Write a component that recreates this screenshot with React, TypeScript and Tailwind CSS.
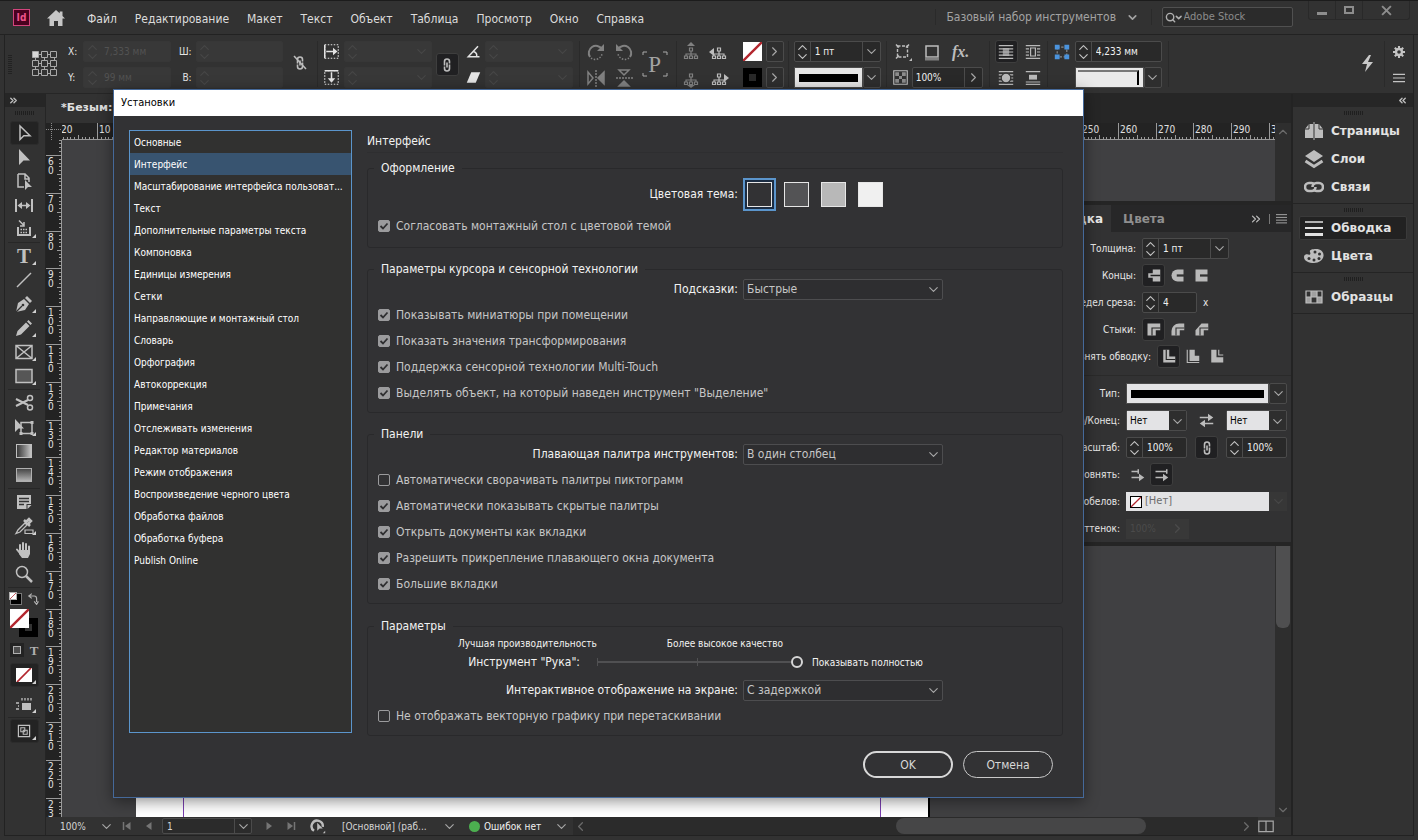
import { useState } from 'react'
import type { ReactNode } from 'react'
import { ChevronDown, ChevronLeft, ChevronRight, ChevronUp, ChevronsLeft, ChevronsRight, Search } from 'lucide-react'

const MENU = ['Файл', 'Редактирование', 'Макет', 'Текст', 'Объект', 'Таблица', 'Просмотр', 'Окно', 'Справка']

const SECTIONS = [
  'Основные',
  'Интерфейс',
  'Масштабирование интерфейса пользоват...',
  'Текст',
  'Дополнительные параметры текста',
  'Компоновка',
  'Единицы измерения',
  'Сетки',
  'Направляющие и монтажный стол',
  'Словарь',
  'Орфография',
  'Автокоррекция',
  'Примечания',
  'Отслеживать изменения',
  'Редактор материалов',
  'Режим отображения',
  'Воспроизведение черного цвета',
  'Обработка файлов',
  'Обработка буфера',
  'Publish Online',
]

const THEMES = [
  { name: 'Темная', color: 'bg-[#323234]' },
  { name: 'Умеренно темная', color: 'bg-[#535355]' },
  { name: 'Умеренно светлая', color: 'bg-[#b8b8b8]' },
  { name: 'Светлая', color: 'bg-[#f0f0f0]' },
]

// 10 mm on the rulers at 100 %
const STEP = 37.8

/* ---------- shared bits ---------- */

function Icon({ children, size = 20, className = '' }: { children: ReactNode; size?: number; className?: string }) {
  return (
    <svg width={size} height={size} viewBox="0 0 20 20" fill="none" stroke="currentColor" strokeWidth="1.5" className={`shrink-0 ${className}`}>
      {children}
    </svg>
  )
}

function Grip() {
  return (
    <svg width="19" height="4" viewBox="0 0 19 4" className="shrink-0" stroke="#1f1f1f">
      <path d="M.5 0v4M2.5 0v4M4.5 0v4M6.5 0v4M8.5 0v4M10.5 0v4M12.5 0v4M14.5 0v4M16.5 0v4M18.5 0v4" />
    </svg>
  )
}

function VLine({ className = '' }: { className?: string }) {
  return <div className={`w-px shrink-0 self-stretch bg-[#2a2a2a] ${className}`} />
}

function Arrows({ dim }: { dim?: boolean }) {
  return (
    <div className={`flex h-full w-4 shrink-0 flex-col items-center justify-center ${dim ? 'text-[#474747]' : 'border-r border-[#4b4b4b] text-[#c4c4c4]'}`}>
      <button type="button" aria-label="Больше" className="flex h-[9px] items-center"><ChevronUp size={15} strokeWidth={1.8} /></button>
      <button type="button" aria-label="Меньше" className="flex h-[9px] items-center"><ChevronDown size={15} strokeWidth={1.8} /></button>
    </div>
  )
}

interface SpinProps {
  label: string
  value?: string
  width: string
  disabled?: boolean
  drop?: boolean
}

function Spin({ label, value = '', width, disabled, drop }: SpinProps) {
  return (
    <div className={`flex h-[21px] shrink-0 items-center overflow-hidden rounded-[2px] border ${width} ${disabled ? 'border-[#373737] bg-[#383838]' : 'border-[#4b4b4b] bg-[#292929]'}`}>
      <Arrows dim={disabled} />
      <input
        aria-label={label}
        defaultValue={value}
        disabled={disabled}
        className={`h-full w-0 min-w-0 flex-1 bg-transparent pl-1 text-[10px] outline-none ${disabled ? 'text-[#525252]' : 'text-[#f0f0f0]'}`}
      />
      {drop && (
        <button type="button" aria-label={`${label}: список`} disabled={disabled} className={`flex h-full w-[18px] items-center justify-center ${disabled ? 'text-[#474747]' : 'border-l border-[#4b4b4b] text-[#a8a8a8]'}`}>
          <ChevronDown size={15} strokeWidth={1.8} />
        </button>
      )}
    </div>
  )
}

function SmallButton({ label, children, wide }: { label: string; children: ReactNode; wide?: string }) {
  return (
    <button type="button" aria-label={label} className={`flex h-[21px] shrink-0 items-center justify-center rounded-[2px] border border-[#4b4b4b] bg-[#2e2e2e] text-[#a8a8a8] ${wide ?? 'w-[18px]'}`}>
      {children}
    </button>
  )
}

function NoneSwatch({ className }: { className: string }) {
  return (
    <svg viewBox="0 0 20 20" className={`shrink-0 bg-white ${className}`}>
      <path d="M0 20L20 0" stroke="#b3262e" strokeWidth="2.5" />
    </svg>
  )
}

function LinkIcon({ className = '' }: { className?: string }) {
  return (
    <svg width="10" height="16" viewBox="0 0 10 16" fill="none" stroke="#bdbdbd" strokeWidth="1.6" className={className}>
      <path d="M2.500 8.500V4.500a2.500 2.500 0 015 0V6.500M7.500 7.500v4a2.500 2.500 0 01-5 0V9.500" />
      <path d="M5 5.500v5" />
    </svg>
  )
}

function IconButton({ label, active, children }: { label: string; active?: boolean; children: ReactNode }) {
  return (
    <button type="button" aria-label={label} className={`flex size-[23px] shrink-0 items-center justify-center rounded-[3px] border text-[#b9b9b9] ${active ? 'border-[#3e3e3e] bg-[#202022]' : 'border-transparent'}`}>
      {children}
    </button>
  )
}

/* ---------- title bar ---------- */

function TitleBar() {
  return (
    <header className="flex h-[34px] shrink-0 items-start border-b border-[#222] pl-[13px]">
      <div className="mt-2 flex size-[17px] items-center justify-center border border-[#d2447c] bg-[#49021f] text-[10px] font-bold leading-none text-[#f0548c]">Id</div>
      <svg width="20" height="18" viewBox="0 0 20 18" fill="#c6c6c6" className="ml-4 mt-2">
        <path d="M10 1L1 9.500h2.500V17H8v-5h4v5h4.500V9.500H19L16.500 7V2.500h-2.800v1.800z" />
      </svg>
      <nav className="ml-3 mt-2 flex text-[12px] leading-5 text-[#dcdcdc]">
        {MENU.map((item) => (
          <button key={item} type="button" className="px-[9px]">{item}</button>
        ))}
      </nav>

      <div className="ml-auto flex items-start">
        <VLine className="mt-2 h-4" />
        <button type="button" className="ml-2.5 mt-1.5 flex items-center gap-2.5 text-[12px] leading-5 text-[#a3a3a3]">
          Базовый набор инструментов
          <ChevronDown size={13} strokeWidth={3} />
        </button>
        <VLine className="ml-3 mt-2 h-4" />
        <label className="ml-2.5 mt-1.5 flex h-5 w-[131px] items-center rounded-[2px] border border-[#505050] bg-[#2b2b2b] pl-0.5 text-[#b0b0b0]">
          <Search size={13} strokeWidth={3} />
          <ChevronDown size={11} strokeWidth={4} className="-ml-0.5" />
          <input aria-label="Adobe Stock" placeholder="Adobe Stock" className="w-full min-w-0 bg-transparent text-[11px] outline-none placeholder:text-[#8c8c8c]" />
        </label>
        <div className="ml-[15px] mr-2 flex h-[19px] rounded-b-[3px] border border-t-0 border-[#292929] text-[#8d8d8d]">
          <button type="button" aria-label="Свернуть" className="flex w-[27px] justify-center border-r border-[#292929] pt-[11px]"><span className="h-[3px] w-2.5 bg-current" /></button>
          <button type="button" aria-label="Развернуть" className="flex w-[27px] items-center justify-center border-r border-[#292929]"><span className="h-2 w-2.5 border-2 border-current" /></button>
          <button type="button" aria-label="Закрыть" className="flex w-[46px] items-center justify-center">
            <Icon size={11}><path d="M2 2l16 16M18 2L2 18" strokeWidth="3.500" /></Icon>
          </button>
        </div>
      </div>
    </header>
  )
}

/* ---------- control bar ---------- */

function TreeIcon({ arrow, dim }: { arrow: string; dim?: boolean }) {
  return (
    <Icon className={dim ? 'text-[#818181]' : 'text-[#bdbdbd]'}>
      <path d="M8.500 6h3v3h-3zM10 9v3M5 14v-2h10v2M3.500 14h3v2.500h-3zM8.500 14h3v2.500h-3zM13.500 14h3v2.500h-3zM10 12v2" strokeWidth="1.200" />
      <path d={arrow} fill="currentColor" stroke="none" />
    </Icon>
  )
}

function Pair({ children, className = '' }: { children: ReactNode; className?: string }) {
  return <div className={`flex shrink-0 flex-col gap-[5px] ${className}`}>{children}</div>
}

function Line({ children, className = '' }: { children: ReactNode; className?: string }) {
  return <div className={`flex h-[21px] items-center ${className}`}>{children}</div>
}

function ControlBar() {
  return (
    <div className="flex h-[59px] shrink-0 items-start border-b border-[#262626] pt-1.5 pl-[3px] text-[10px] text-[#e4e4e4]">
      <svg width="4" height="19" viewBox="0 0 4 19" stroke="#222" className="mt-3.5 shrink-0">
        <path d="M0 .5h4M0 2.500h4M0 4.500h4M0 6.500h4M0 8.500h4M0 10.500h4M0 12.500h4M0 14.500h4M0 16.500h4M0 18.500h4" />
      </svg>
      <svg width="27" height="27" viewBox="0 0 27 27" fill="none" stroke="#a9a9a9" className="ml-5 mt-2.5 shrink-0">
        <path d="M7 3.500h3M16 3.500h3M7 12.500h3M16 12.500h3M7 22.500h3M16 22.500h3M3.500 7v3M12.500 7v3M22.500 7v3M3.500 16v3M12.500 16v3M22.500 16v3" />
        <path d="M.5.5h6v6h-6z" fill="#d8d8d8" />
        <path d="M9.500.5h6v6h-6zM18.500.5h6v6h-6zM.5 9.500h6v6h-6zM9.500 9.500h6v6h-6zM18.500 9.500h6v6h-6zM.5 18.500h6v6h-6zM9.500 18.500h6v6h-6zM18.500 18.500h6v6h-6z" fill="#323232" />
      </svg>
      <Pair className="ml-[9px]">
        <Line className="gap-1"><span className="w-[11px]">X:</span><Spin label="X" value="7,333 мм" width="w-[88px]" disabled /></Line>
        <Line className="gap-1"><span className="w-[11px]">Y:</span><Spin label="Y" value="99 мм" width="w-[88px]" disabled /></Line>
      </Pair>
      <Pair className="ml-2">
        <Line className="justify-end gap-1"><span>Ш:</span><Spin label="Ш" width="w-[87px]" disabled /></Line>
        <Line className="justify-end gap-1"><span>В:</span><Spin label="В" width="w-[87px]" disabled /></Line>
      </Pair>
      <div className="relative ml-3 mt-3.5 shrink-0">
        <LinkIcon />
        <svg width="14" height="16" viewBox="0 0 14 16" className="absolute -left-0.5 top-0" stroke="#bdbdbd" strokeWidth="1.500"><path d="M1 1l12 13" /></svg>
      </div>
      <VLine className="mb-1.5 ml-3" />
      <Pair className="ml-1.5">
        <Line className="gap-[5px]">
          <Icon size={15}><path d="M1 1h18v18H1z" strokeDasharray="2 2" /><path d="M1 1v18M3 10h12" strokeWidth="2" /><path d="M12 5l6 5-6 5z" fill="currentColor" stroke="none" /></Icon>
          <Spin label="Масштаб по X" width="w-[88px]" disabled drop />
        </Line>
        <Line className="gap-[5px]">
          <Icon size={15}><path d="M1 1h18v18H1z" strokeDasharray="2 2" /><path d="M1 1h18M10 3v12" strokeWidth="2" /><path d="M5 11l5 6 5-6z" fill="currentColor" stroke="none" /></Icon>
          <Spin label="Масштаб по Y" width="w-[88px]" disabled drop />
        </Line>
      </Pair>
      <div className="ml-1 mt-3"><IconButton label="Сохранять пропорции" active><LinkIcon /></IconButton></div>
      <Pair className="ml-[7px]">
        <Line className="gap-1">
          <Icon size={15}><path d="M16 3L3 17h15M10 10c4 1 5 4 4 7" strokeWidth="2" /></Icon>
          <Spin label="Поворот" width="w-[88px]" disabled drop />
        </Line>
        <Line className="gap-1">
          <Icon size={15}><path d="M7 3h12l-6 14H1z" fill="currentColor" stroke="none" /></Icon>
          <Spin label="Наклон" width="w-[88px]" disabled drop />
        </Line>
      </Pair>
      <VLine className="mb-1.5 ml-1.5" />
      <Pair className="ml-1.5 text-[#818181]">
        <Line className="gap-2">
          <Icon><path d="M4 15A7 7 0 1116 7" strokeWidth="2" /><path d="M18 2v7h-7z" fill="currentColor" stroke="none" /><path d="M5 16a7 7 0 0011-4" strokeDasharray="1.500 1.500" /></Icon>
          <Icon><path d="M16 15A7 7 0 104 7" strokeWidth="2" /><path d="M2 2v7h7z" fill="currentColor" stroke="none" /><path d="M15 16a7 7 0 01-11-4" strokeDasharray="1.500 1.500" /></Icon>
        </Line>
        <Line className="gap-2">
          <Icon><path d="M2 4v12l5-6z" /><path d="M18 4v12l-6-6z" fill="currentColor" /><path d="M10 2v17" strokeDasharray="2 1" /></Icon>
          <Icon><path d="M5 2h10l-5 5z" /><path d="M5 18h10l-5-5z" fill="currentColor" /><path d="M2 10h17" strokeDasharray="2 1" /></Icon>
        </Line>
      </Pair>
      <div className="relative ml-2 mt-2.5 flex size-[26px] shrink-0 items-center justify-center">
        <svg width="26" height="26" viewBox="0 0 26 26" fill="none" stroke="#a9a9a9" className="absolute inset-0"><path d="M1 4V1h4M21 1h4v3M1 22v3h4M21 25h4v-3" /></svg>
        <span className="font-['Liberation_Serif',serif] text-[23px] leading-none text-[#a3a3a3]">P</span>
      </div>
      <VLine className="mb-1.5 ml-2" />
      <Pair className="ml-1">
        <Line className="gap-2"><TreeIcon arrow="M10 0l4 4H6z" dim /><TreeIcon arrow="M0 10l5-4v8z" /></Line>
        <Line className="gap-2"><TreeIcon arrow="M6 17h8l-4 3z" dim /><TreeIcon arrow="M20 10l-5-4v8z" /></Line>
      </Pair>
      <Pair className="ml-3.5">
        <Line className="gap-1">
          <NoneSwatch className="size-[19px]" />
          <SmallButton label="Заливка"><ChevronRight size={15} strokeWidth={1.8} /></SmallButton>
        </Line>
        <Line className="gap-1">
          <span className="size-[19px] border-[6px] border-black bg-[#292929]" />
          <SmallButton label="Обводка"><ChevronRight size={15} strokeWidth={1.8} /></SmallButton>
        </Line>
      </Pair>
      <VLine className="mb-1.5 ml-1" />
      <Pair className="ml-[5px]">
        <Spin label="Толщина обводки" value="1 пт" width="w-[87px]" drop />
        <Line>
          <span className="flex h-[21px] w-[69px] items-center border border-[#4b4b4b] bg-[#e6e6e6] px-1"><span className="h-2 w-full bg-black" /></span>
          <SmallButton label="Тип обводки"><ChevronDown size={15} strokeWidth={1.8} /></SmallButton>
        </Line>
      </Pair>
      <VLine className="mb-1.5 ml-[5px]" />
      <Pair className="ml-1.5 text-[#bdbdbd]">
        <Line className="gap-[9px]">
          <Icon><path d="M4.500 4h10v11h-10z" strokeWidth="1.400" strokeDasharray="3 1.500" /><path d="M3 2.500l3 3M16 2.500l-3 3M3 16.500l3-3" /><path d="M19 16v3h-3z" fill="currentColor" stroke="none" /></Icon>
          <Icon><path d="M4 4h12v11H4z" /><path d="M3 17h14" strokeWidth="3" stroke="#808080" /></Icon>
          <span className="w-5 text-center font-['Liberation_Serif',serif] text-[16px] font-bold italic leading-5">fx.</span>
        </Line>
        <Line>
          <Icon size={15}><path d="M1 1h18v18H1z" /><path d="M3 3h5v5H3zM12 3h5v5h-5zM8 8h4v4H8zM3 12h5v5H3zM12 12h5v5h-5z" fill="#8c8c8c" stroke="none" /></Icon>
          <span className="ml-1 flex h-[21px] w-[71px] items-center rounded-[2px] border border-[#4b4b4b] bg-[#292929]">
            <input aria-label="Непрозрачность" defaultValue="100%" className="w-0 min-w-0 flex-1 bg-transparent pl-[3px] text-[10px] text-[#f0f0f0] outline-none" />
            <button type="button" aria-label="Изменить непрозрачность" className="flex h-full w-[18px] items-center justify-center border-l border-[#4b4b4b] text-[#a8a8a8]"><ChevronRight size={15} strokeWidth={1.8} /></button>
          </span>
        </Line>
      </Pair>
      <VLine className="mb-1.5 ml-1.5" />
      <Pair className="ml-[5px]">
        <Line className="gap-1">
          <IconButton label="Без обтекания" active><Icon size={16}><path d="M1 2h18M1 6h18M1 10h18M1 14h18M1 18h18" /><path d="M6 5h8v10H6z" fill="currentColor" stroke="none" opacity=".7" /></Icon></IconButton>
          <IconButton label="Обтекание по рамке"><Icon size={16}><path d="M1 2h18M1 6h4M1 10h4M1 14h4M15 6h4M15 10h4M15 14h4M1 18h18M7 5h6v10H7z" /></Icon></IconButton>
        </Line>
        <Line className="gap-1">
          <IconButton label="Обтекание по форме"><Icon size={16}><path d="M1 2h18M1 6h18M1 10h18M1 14h18M1 18h18" /><circle cx="10" cy="10" r="6" fill="currentColor" stroke="#323232" /></Icon></IconButton>
          <IconButton label="Перескок через объект"><Icon size={16}><path d="M1 2h18M1 15h18M1 18h18" /><path d="M5 6h10v6H5z" fill="currentColor" stroke="none" /></Icon></IconButton>
        </Line>
      </Pair>
      <VLine className="mb-1.5 ml-0.5" />
      <Pair className="ml-1.5">
        <Line className="gap-[5px]">
          <Icon size={16}><path d="M4 4h12v12H4z" stroke="#8a8a8a" strokeDasharray="3 2" /><path d="M1 1h6v6H1zM13 1h6v6h-6zM1 13h6v6H1zM13 13h6v6h-6z" fill="#4b93dc" stroke="none" /></Icon>
          <Spin label="Размер угла" value="4,233 мм" width="w-[87px]" />
        </Line>
        <Line className="pl-[21px]">
          <span className="h-[21px] w-[69px] border border-[#4b4b4b] bg-[#e9e9e9] pr-1 pl-0.5 pt-0.5"><span className="block h-[15px] border-r-2 border-t-2 border-t-[#777] border-r-black" /></span>
          <SmallButton label="Форма угла"><ChevronDown size={15} strokeWidth={1.8} /></SmallButton>
        </Line>
      </Pair>
      <VLine className="mb-1.5 ml-1.5" />
      <div className="ml-auto mt-3.5"><svg width="12" height="17" viewBox="0 0 12 17" fill="#c9c9c9"><path d="M7 0L0 9h5l-2 8 8-10H6l3-7z" /></svg></div>
      <VLine className="mb-1.5 ml-2.5" />
      <Pair className="ml-2 mr-2 text-[#c4c4c4]">
        <Line><Icon size={12}><circle cx="10" cy="10" r="5" strokeWidth="4" /><path d="M10 0v4M10 16v4M0 10h4M16 10h4M3 3l3 3M14 14l3 3M17 3l-3 3M6 14l-3 3" strokeWidth="3.500" /></Icon></Line>
        <Line><Icon size={12}><path d="M0 4h20M0 10h20M0 16h20" strokeWidth="2" /></Icon></Line>
      </Pair>
    </div>
  )
}

/* ---------- toolbox ---------- */

function Tool({ label, active, flyout, children }: { label: string; active?: boolean; flyout?: boolean; children: ReactNode }) {
  return (
    <button type="button" aria-label={label} className={`relative flex h-6 w-[29px] shrink-0 items-center justify-center rounded-[3px] border text-[#c0c0c0] ${active ? 'border-[#2c2c2c] bg-[#232323]' : 'border-transparent'}`}>
      {children}
      {flyout && <span className="absolute bottom-0.5 right-0.5 size-0 border-b-[4px] border-l-[4px] border-b-[#d0d0d0] border-l-transparent" />}
    </button>
  )
}

function ToolLine() {
  return <div className="my-px h-px w-8 shrink-0 bg-[#272727]" />
}

function Toolbox() {
  return (
    <aside className="flex w-[41px] shrink-0 flex-col border-r border-[#252525]">
      <div className="flex h-[13px] shrink-0 items-center bg-[#262626] pl-[3px] text-[#bdbdbd]"><ChevronsRight size={11} strokeWidth={3} /></div>
      <div className="flex flex-col items-center pr-0.5">
        <div className="flex h-[14px] shrink-0 pt-1"><Grip /></div>
        <Tool label="Выделение" active><Icon><path d="M6 3v13.500l3.800-3.700H16z" /></Icon></Tool>
        <Tool label="Частичное выделение"><Icon><path d="M5 2v16l4.500-4.500H16z" fill="currentColor" stroke="none" /></Icon></Tool>
        <Tool label="Страница"><Icon><path d="M4 3h7l4 4v4M4 3v13h6M11 3v5h4" /><path d="M11 9v10l3-3h4z" fill="currentColor" stroke="none" /></Icon></Tool>
        <Tool label="Зазор"><Icon><path d="M2 4v13M18 4v13" strokeWidth="2" /><path d="M5 10.500h10" /><path d="M8 7l-4.500 3.500L8 14zM12 7l4.500 3.500L12 14z" fill="currentColor" stroke="none" /></Icon></Tool>
        <Tool label="Подборщик содержимого" flyout><Icon><path d="M4 8v8h12V8" strokeWidth="2" /><path d="M6.500 10.500h7M6.500 13.500h7" strokeDasharray="1.500 1" /><path d="M5 1.500l5 5M10 3v4H6" /></Icon></Tool>
        <ToolLine />
        <Tool label="Текст" flyout><span className="font-['Liberation_Serif',serif] text-[21px] font-bold leading-none">T</span></Tool>
        <Tool label="Линия"><Icon><path d="M3 17L17 3" /></Icon></Tool>
        <Tool label="Перо" flyout><Icon><path d="M2 18l2-9 6-4 5 5-4 6z" fill="currentColor" stroke="none" /><path d="M11 4l2-2 5 5-2 2z" fill="currentColor" stroke="none" /><path d="M2 18l6-6" stroke="#323232" strokeWidth="1.200" /><circle cx="9" cy="11" r="1.300" fill="#323232" stroke="none" /></Icon></Tool>
        <Tool label="Карандаш" flyout><Icon><path d="M2 18l1.500-5L12 4.500l3.500 3.500L7 16.500zM13 3.500L14.500 2 18 5.500 16.500 7z" fill="currentColor" stroke="none" /></Icon></Tool>
        <Tool label="Прямоугольный фрейм" flyout><Icon><path d="M2 3.500h16v13H2zM2 3.500l16 13M18 3.500l-16 13" /></Icon></Tool>
        <Tool label="Прямоугольник" flyout><Icon><path d="M2 3.500h16v13H2z" fill="#565656" /></Icon></Tool>
        <ToolLine />
        <Tool label="Ножницы"><Icon><path d="M2 6l12 6M2 13l12-6" strokeWidth="2" /><circle cx="16" cy="5" r="2.500" /><circle cx="16" cy="14.500" r="2.500" /></Icon></Tool>
        <Tool label="Свободное трансформирование" flyout><Icon><path d="M7 5.500h11v11H7z" /><path d="M1 2v13l3.500-3.500H10z" fill="currentColor" stroke="none" /><path d="M16.500 4h3v3h-3zM16.500 15h3v3h-3zM5.500 15h3v3h-3z" fill="currentColor" stroke="none" /></Icon></Tool>
        <Tool label="Градиент"><span className="h-3.5 w-4 border border-[#c0c0c0] bg-gradient-to-r from-[#3a3a3a] to-[#c4c4c4]" /></Tool>
        <Tool label="Растушевка градиента"><span className="h-3.5 w-4 border border-[#b0b0b0] bg-gradient-to-b from-[#484848] to-[#b4b4b4]" /></Tool>
        <ToolLine />
        <Tool label="Заметка"><Icon><path d="M3 3h14v9h-4.500v5H3z" fill="currentColor" stroke="none" /><path d="M13.500 17v-4h4z" fill="currentColor" stroke="none" /><path d="M5 6.500h10M5 9.500h10M5 12.500h5" stroke="#323232" /></Icon></Tool>
        <Tool label="Пипетка" flyout><Icon><path d="M2 17.500L4 14l7-7 2 2-7 7z" strokeWidth="1.300" /><path d="M10 4l6 6M12 6l3-3 2 2-3 3z" strokeWidth="2.500" /><path d="M11 14h8v3.500h-8z" strokeWidth="1.200" /></Icon></Tool>
        <Tool label="Рука"><Icon><path d="M6 12V5M9 11V3M12 11V4M15 12V6.500M3 9.500l4 5" strokeWidth="2" strokeLinecap="round" /><path d="M5 10h11v4l-2 4H8l-3-4z" fill="currentColor" stroke="none" /></Icon></Tool>
        <Tool label="Масштаб"><Icon><circle cx="8" cy="8" r="5.500" /><path d="M12 12l6 6" strokeWidth="2.500" /></Icon></Tool>
        <ToolLine />
        <div className="flex h-5 w-[29px] shrink-0 items-center justify-between">
          <button type="button" aria-label="Цвета по умолчанию" className="relative size-3 border border-[#777] bg-black"><NoneSwatch className="absolute -left-0.5 -top-0.5 size-2 border border-[#b0b0b0]" /></button>
          <button type="button" aria-label="Поменять местами"><Icon size={12} className="text-[#b0b0b0]"><path d="M4 5h8a4 4 0 014 4v6M8 1L3 5l5 4M12 14l4 5 3-5" strokeWidth="2" /></Icon></button>
        </div>
        <div className="relative h-7 w-7 shrink-0">
          <span className="absolute bottom-0 right-0 size-[19px] border-[6px] border-black" />
          <NoneSwatch className="absolute left-0 top-0 size-[19px]" />
        </div>
        <div className="flex h-[26px] w-[29px] shrink-0 items-center justify-between">
          <button type="button" aria-label="Форматирование влияет на контейнер" className="flex size-3.5 items-center justify-center bg-[#232323]"><span className="size-2 border border-[#b0b0b0] bg-[#4d4d4d]" /></button>
          <button type="button" aria-label="Форматирование влияет на текст" className="font-['Liberation_Serif',serif] text-[13px] font-bold leading-none text-[#b0b0b0]">T</button>
        </div>
        <Tool label="Применить «Нет»" active flyout><NoneSwatch className="h-3.5 w-4" /></Tool>
        <div className="h-[5px] shrink-0" />
        <Tool label="Параметры просмотра" flyout><Icon><path d="M8 9h9v7H8z" fill="currentColor" stroke="none" /><path d="M8 4v2.500M11 4v2.500M14 4v2.500M17 4v2.500M2 9h3M4 12h1M2 15h3" strokeWidth="1.300" /></Icon></Tool>
        <ToolLine />
        <Tool label="Режим экрана" active flyout><Icon size={16}><path d="M3 3h14v14H3z" /><path d="M6 6h5v5H6zM9 9h5v5H9z" strokeWidth="1.300" /></Icon></Tool>
      </div>
    </aside>
  )
}

/* ---------- document ---------- */

function TopRuler() {
  const marks = Array.from({ length: 33 }, (_, i) => i - 2)
  return (
    <svg height="17" className="min-w-0 flex-1 bg-[#232323]" stroke="#9a9a9a">
      {marks.map((n) => {
        const x = Math.round(73 + n * STEP)
        return (
          <g key={n}>
            <path d={`M${x + 0.5} 0v17`} />
            {[1, 2, 3, 4, 5, 6, 7, 8, 9].map((k) => (
              <path key={k} d={`M${Math.round(x + (k * STEP) / 10) + 0.5} ${k === 5 ? 12 : 14}V17`} />
            ))}
            <text x={x + 2} y="10" fontSize="10" fill="#e0e0e0" stroke="none">{Math.abs(n * 10)}</text>
          </g>
        )
      })}
      <path d="M0 16.500h2000" />
    </svg>
  )
}

function SideRuler() {
  const marks = Array.from({ length: 19 }, (_, i) => i + 5)
  return (
    <svg width="16" className="h-full shrink-0 bg-[#232323]" stroke="#9a9a9a">
      {marks.map((n) => {
        const y = Math.round(15 + (n - 6) * STEP)
        return (
          <g key={n}>
            <path d={`M0 ${y + 0.5}h16`} />
            {[1, 2, 3, 4, 5, 6, 7, 8, 9].map((k) => (
              <path key={k} d={`M${k === 5 ? 11 : 13} ${Math.round(y + (k * STEP) / 10) + 0.5}H16`} />
            ))}
            {y > 0 && String(n * 10).split('').map((d, i) => (
              <text key={i} x="2" y={y + 10 + i * 9} fontSize="10" fill="#e0e0e0" stroke="none">{d}</text>
            ))}
          </g>
        )
      })}
      <path d="M15.500 0v2000" />
    </svg>
  )
}

function PanelRow({ label, wide, children }: { label: string; wide?: string; children: ReactNode }) {
  return (
    <div className="flex h-[27px] items-center gap-1.5">
      <span className={`shrink-0 whitespace-nowrap text-right ${wide ?? 'w-[117px]'}`}>{label}</span>
      {children}
    </div>
  )
}

function LightSelect({ label }: { label: string }) {
  return (
    <div className="relative flex w-[61px] rounded-[2px] border border-[#4b4b4b]">
      <select aria-label={label} className="h-[19px] w-full appearance-none bg-transparent bg-[linear-gradient(90deg,#e3e3e5_42px,#2e2e2e_42px)] pl-[3px] text-[10px] text-black outline-none">
        <option>Нет</option>
      </select>
      <ChevronDown size={15} strokeWidth={1.8} className="pointer-events-none absolute right-px top-[3px] text-[#a8a8a8]" />
    </div>
  )
}

function StrokePanel() {
  return (
    <section className="absolute right-0 top-[107px] w-[272px] border-y-4 border-[#252525] bg-[#323233] text-[10px] text-[#e8e8e8]">
      <div className="flex h-[27px] bg-[#272728] text-[12px] font-bold">
        <button type="button" className="flex w-[92px] items-center justify-end bg-[#323233] pr-2 font-['DejaVu_Sans',sans-serif]">Обводка</button>
        <button type="button" className="pl-3 font-['DejaVu_Sans',sans-serif] text-[#8f8f8f]">Цвета</button>
        <div className="ml-auto flex items-center gap-1.5 pr-1 text-[#bdbdbd]">
          <ChevronsRight size={14} />
          <span className="h-2.5 w-px bg-[#777]" />
          <Icon size={11}><path d="M0 3h20M0 8h20M0 13h20M0 18h20" /></Icon>
        </div>
      </div>
      <div className="flex flex-col pt-[3px]">
        <PanelRow label="Толщина:"><Spin label="Толщина" value="1 пт" width="w-[87px]" drop /></PanelRow>
        <PanelRow label="Концы:">
          <div className="flex gap-px">
            <IconButton label="Плоский" active><Icon size={15}><path d="M9 2h10v16H9zM3 7h8v6H3z" fill="currentColor" stroke="none" /><path d="M6 10h13" stroke="#222" strokeWidth="2" /></Icon></IconButton>
            <IconButton label="Круглый"><Icon size={15}><path d="M18 2v16h-8a8 8 0 010-16z" fill="currentColor" stroke="none" /><path d="M9 10h11" stroke="#323232" strokeWidth="3" /></Icon></IconButton>
            <IconButton label="Выступающий"><Icon size={15}><path d="M2 2h16v16H2z" fill="currentColor" stroke="none" /><path d="M8 10h12" stroke="#323232" strokeWidth="3" /></Icon></IconButton>
          </div>
        </PanelRow>
        <PanelRow label="Предел среза:"><Spin label="Предел среза" value="4" width="w-[55px]" /><span>x</span></PanelRow>
        <PanelRow label="Стыки:">
          <div className="flex gap-px">
            <IconButton label="Срез" active><Icon size={15}><path d="M2 2h17v9h-6v7H2z" fill="currentColor" stroke="none" /><path d="M8 18V8h11" stroke="#222" /></Icon></IconButton>
            <IconButton label="Скругление"><Icon size={15}><path d="M19 2v9h-6v7H2v-6A10 10 0 0112 2z" fill="currentColor" stroke="none" /><path d="M8 18V8h11" stroke="#323232" /></Icon></IconButton>
            <IconButton label="Скос"><Icon size={15}><path d="M19 2v9h-6v7H2v-7l8-9z" fill="currentColor" stroke="none" /><path d="M8 18V8h11" stroke="#323232" /></Icon></IconButton>
          </div>
        </PanelRow>
        <PanelRow label="Выровнять обводку:" wide="w-[132px]">
          <div className="flex gap-px">
            <IconButton label="По центру" active><Icon size={15}><path d="M3 1h8v9h8v8H3z" fill="currentColor" stroke="none" /><path d="M7 1v13h12" stroke="#222" /></Icon></IconButton>
            <IconButton label="Внутри"><Icon size={15}><path d="M6 1h7v8h6v7H6z" fill="currentColor" stroke="none" /><path d="M3 1v17h16" /></Icon></IconButton>
            <IconButton label="Снаружи"><Icon size={15}><path d="M3 1h7v10h9v7H3z" fill="currentColor" stroke="none" /><path d="M13 1v7h6" /></Icon></IconButton>
          </div>
        </PanelRow>
        <div className="mb-1 mt-[5px] h-px bg-[#2a2a2a]" />
        <PanelRow label="Тип:" wide="w-[101px]">
          <div className="flex w-[161px]">
            <span className="flex h-[21px] flex-1 items-center border border-[#4b4b4b] bg-[#e3e3e5] px-1"><span className="h-2 w-full bg-black" /></span>
            <SmallButton label="Тип"><ChevronDown size={15} strokeWidth={1.8} /></SmallButton>
          </div>
        </PanelRow>
        <PanelRow label="Начало/Конец:" wide="w-[101px]">
          <LightSelect label="Начало" />
          <Icon size={15} className="mx-1.5 text-[#bdbdbd]"><path d="M1 6h13M6 14h13" strokeWidth="2" /><path d="M12 1l7 5-7 5zM8 9l-7 5 7 5z" fill="currentColor" stroke="none" /></Icon>
          <LightSelect label="Конец" />
        </PanelRow>
        <PanelRow label="Масштаб:" wide="w-[101px]">
          <Spin label="Масштаб начала" value="100%" width="w-[61px]" />
          <span className="mx-0.5"><IconButton label="Связать масштабы" active><LinkIcon /></IconButton></span>
          <Spin label="Масштаб конца" value="100%" width="w-[61px]" />
        </PanelRow>
        <PanelRow label="Выровнять:" wide="w-[101px]">
          <div className="flex gap-px">
            <IconButton label="За конец контура"><Icon size={15}><path d="M2 6h9M2 14h12M11 3v6" strokeWidth="2" /><path d="M12 9l7 5-7 5z" fill="currentColor" stroke="none" /></Icon></IconButton>
            <IconButton label="На конец контура" active><Icon size={15}><path d="M2 6h15M2 14h12M17 3v6" strokeWidth="2" /><path d="M12 9l7 5-7 5z" fill="currentColor" stroke="none" /></Icon></IconButton>
          </div>
        </PanelRow>
        <PanelRow label="Цвет пробелов:" wide="w-[101px]">
          <div className="flex w-[161px]">
            <span className="flex h-[19px] flex-1 items-center gap-[3px] bg-[#e3e3e5] pl-1 text-[11px] text-[#6c6c6c]"><NoneSwatch className="size-3 border border-black" />[Нет]</span>
            <button type="button" disabled aria-label="Цвет пробелов" className="flex w-[18px] items-center justify-center bg-[#373737] text-[#474747]"><ChevronDown size={15} /></button>
          </div>
        </PanelRow>
        <PanelRow label="Оттенок:" wide="w-[101px]">
          <div className="flex h-5 w-[63px] items-center justify-between bg-[#383838] px-1 text-[#4b4b4b]">100%<ChevronRight size={15} /></div>
        </PanelRow>
      </div>
    </section>
  )
}

function Workspace() {
  return (
    <main className="relative flex min-w-0 flex-1 flex-col">
      <div className="flex h-[29px] shrink-0 bg-[#262626]">
        <button type="button" className="bg-[#323232] px-[15px] font-['DejaVu_Sans',sans-serif] text-[11px] font-bold text-[#e0e0e0]">*Безым:</button>
      </div>
      <div className="flex shrink-0">
        <svg width="16" height="17" viewBox="0 0 16 17" fill="none" stroke="#8a8a8a" strokeDasharray="1 1" className="bg-[#232323]"><path d="M5.500 0v17M0 6.500h16" /></svg>
        <TopRuler />
        <div className="flex w-4 items-center justify-center bg-[#2e2e2e] text-[#6b6b6b]"><ChevronUp size={14} /></div>
      </div>
      <div className="flex min-h-0 flex-1">
        <SideRuler />
        <div className="relative min-w-0 flex-1 overflow-hidden bg-[#404042]">
          <div className="absolute inset-y-0 left-[74px] w-[794px] border-r-2 border-black bg-white px-[47px]">
            <div className="h-full border-x border-[#7a3fb0]" />
          </div>
        </div>
        <div className="flex w-4 shrink-0 flex-col items-center bg-[#2e2e2e] text-[#6b6b6b]">
          <div className="mt-[100px] h-[388px] w-3.5 rounded-[6px] bg-[#4f4f50]" />
          <ChevronDown size={14} className="mt-auto" />
        </div>
      </div>
      <StatusBar />
      <StrokePanel />
    </main>
  )
}

function StatusBar() {
  return (
    <footer className="flex h-[18px] shrink-0 items-center bg-[#323232] pl-3.5 text-[10px] text-[#d4d4d4]">
      <span className="w-[39px]">100%</span>
      <ChevronDown size={15} strokeWidth={1.8} className="text-[#a8a8a8]" />
      <div className="ml-2 flex items-center gap-3 text-[#757575]">
        <Icon size={10}><path d="M3 2v16" strokeWidth="3" /><path d="M17 2v16L6 10z" fill="currentColor" stroke="none" /></Icon>
        <Icon size={10}><path d="M15 2v16L4 10z" fill="currentColor" stroke="none" /></Icon>
      </div>
      <div className="ml-2 flex h-4 w-[90px] items-center rounded-[2px] border border-[#4b4b4b] bg-[#2b2b2b]">
        <input aria-label="Страница" defaultValue="1" className="w-0 min-w-0 flex-1 bg-transparent pl-1 text-[10px] outline-none" />
        <button type="button" aria-label="Список страниц" className="flex h-full w-[17px] items-center justify-center border-l border-[#4b4b4b] text-[#a8a8a8]"><ChevronDown size={15} strokeWidth={1.8} /></button>
      </div>
      <div className="ml-3 flex items-center gap-3 text-[#757575]">
        <Icon size={10}><path d="M5 2v16l11-8z" fill="currentColor" stroke="none" /></Icon>
        <Icon size={10}><path d="M17 2v16" strokeWidth="3" /><path d="M3 2v16l11-8z" fill="currentColor" stroke="none" /></Icon>
      </div>
      <Icon size={16} className="ml-3.5 text-[#bdbdbd]"><path d="M5 16A7 7 0 1116 11" strokeWidth="3" /><path d="M9 6v10l3-3h4z" fill="currentColor" stroke="none" /><path d="M19 16v3h-3z" fill="currentColor" stroke="none" /></Icon>
      <span className="ml-4 w-[100px]">[Основной] (раб...</span>
      <ChevronDown size={15} strokeWidth={1.8} className="text-[#a8a8a8]" />
      <span className="ml-3 size-[11px] rounded-full bg-[#4caf50]" />
      <span className="ml-1 w-[70px] text-[#f0f0f0]">Ошибок нет</span>
      <ChevronDown size={15} strokeWidth={1.8} className="text-[#a8a8a8]" />
      <div className="ml-1 flex h-full min-w-0 flex-1 items-center bg-[#2b2b2b] text-[#6b6b6b]">
        <ChevronLeft size={15} />
        <div className="ml-[45%] h-4 w-[250px] rounded-[8px] bg-[#464647]" />
        <ChevronRight size={15} className="ml-auto mr-1" />
      </div>
      <Icon size={16} className="mr-[17px] text-[#a8a8a8]"><path d="M1 4h18v13H1zM10 4v13" /></Icon>
    </footer>
  )
}

/* ---------- right dock ---------- */

function DockItem({ label, active, children }: { label: string; active?: boolean; children: ReactNode }) {
  return (
    <button type="button" className={`mx-1.5 flex h-[24px] items-center gap-[7px] rounded-[2px] border pl-1 font-['DejaVu_Sans',sans-serif] text-[12px] font-bold text-[#e2e2e2] ${active ? 'border-[#3a3a3a] bg-[#222]' : 'border-transparent'}`}>
      {children}
      {label}
    </button>
  )
}

function DockGroup({ children }: { children: ReactNode }) {
  return (
    <div className="flex flex-col gap-1 border-b border-[#242424] pb-1">
      <div className="flex h-2 justify-center pt-1"><Grip /></div>
      {children}
    </div>
  )
}

function Dock() {
  return (
    <aside className="w-[122px] shrink-0 border-l-2 border-[#232323]">
      <div className="flex h-[13px] items-center justify-end bg-[#262626] pr-[5px] text-[#bdbdbd]"><ChevronsLeft size={11} strokeWidth={3} /></div>
      <DockGroup>
        <DockItem label="Страницы"><Icon className="text-[#bdbdbd]"><path d="M1 8l4-5h4v14H1zM11 3h4l4 5v9h-8z" fill="currentColor" stroke="none" /><path d="M10 1v18" strokeWidth="1" /><path d="M5 3v5H1M15 3v5h4" stroke="#323232" strokeWidth="1" /></Icon></DockItem>
        <DockItem label="Слои"><Icon className="text-[#bdbdbd]"><path d="M10 1l9 6-9 6-9-6z" fill="currentColor" stroke="none" /><path d="M1.500 12l8.500 5.500 8.500-5.500" strokeWidth="3" /></Icon></DockItem>
        <DockItem label="Связи"><Icon className="text-[#bdbdbd]"><path d="M10.500 7.500A4 4 0 007.500 6H5a3.800 3.800 0 000 8h2.500a4 4 0 004-4" strokeWidth="2.600" /><path d="M9.500 12.500a4 4 0 003 1.500H15a3.800 3.800 0 000-8h-2.500a4 4 0 00-4 4" strokeWidth="2.600" /></Icon></DockItem>
      </DockGroup>
      <DockGroup>
        <DockItem label="Обводка" active><Icon><path d="M1 4h18" /><path d="M1 10h18" strokeWidth="2" /><path d="M1 16.500h18" strokeWidth="3" /></Icon></DockItem>
        <DockItem label="Цвета"><Icon className="text-[#bdbdbd]"><path d="M12 3c5 0 8 3 7.500 7S15 17 10 17 0 15 0 11c0-2 2-3 4-2.500S7 8 6 6s2-3 6-3z" fill="currentColor" stroke="none" /><g fill="#323232" stroke="none"><circle cx="11" cy="6" r="1.500" /><circle cx="15.500" cy="8" r="1.500" /><circle cx="15" cy="12.500" r="1.500" /><circle cx="10" cy="14" r="1.500" /><circle cx="5" cy="12.500" r="1.500" /></g></Icon></DockItem>
      </DockGroup>
      <DockGroup>
        <DockItem label="Образцы"><Icon className="text-[#bdbdbd]"><path d="M2 4h16v12H2zM2 10h16M7 4v12M13 4v12" strokeWidth="1.200" /><path d="M7 4h6v6H7zM2 10h5v6H2zM13 10h5v6h-5z" fill="currentColor" stroke="none" opacity=".8" /></Icon></DockItem>
      </DockGroup>
    </aside>
  )
}

/* ---------- preferences dialog ---------- */

function Group({ title, children, className }: { title: string; children: ReactNode; className: string }) {
  return (
    <fieldset className={`min-w-0 rounded-[3px] border border-[#29292b] ${className}`}>
      <legend className="ml-1.5 h-3.5 px-[7px] leading-[14px] text-[#f2f2f2]">{title}</legend>
      {children}
    </fieldset>
  )
}

function Check({ label, checked }: { label: string; checked?: boolean }) {
  const [on, setOn] = useState(!!checked)
  return (
    <label className="flex h-[26px] w-fit items-center gap-1.5 pl-2.5 text-[#c6c6c6]">
      <span className="relative size-3">
        <input
          type="checkbox"
          checked={on}
          onChange={() => setOn((v) => !v)}
          className="block size-3 appearance-none rounded-[2px] border border-[#9b9b9d] checked:bg-[#9b9b9d]"
        />
        {on && (
          <svg viewBox="0 0 12 12" fill="none" stroke="#2e2e30" strokeWidth="1.8" className="pointer-events-none absolute inset-0">
            <path d="M2.500 6l2.500 2.500L9.500 3.500" />
          </svg>
        )}
      </span>
      {label}
    </label>
  )
}

function SelectRow({ id, label, value, height = 'h-[26px]' }: { id: string; label: string; value: string; height?: string }) {
  return (
    <div className={`flex items-center gap-[5px] ${height}`}>
      <label htmlFor={id} className="w-[370px] text-right text-[#f2f2f2]">{label}</label>
      <span className="relative">
        <select id={id} className="block h-[21px] w-[200px] appearance-none rounded-[2px] border border-[#4d4d4f] bg-[#2e2e30] pl-[3px] text-[#c6c6c6] outline-none">
          <option>{value}</option>
        </select>
        <ChevronDown size={15} strokeWidth={1.8} className="pointer-events-none absolute right-0.5 top-[3px] text-[#a8a8a8]" />
      </span>
    </div>
  )
}

function Preferences() {
  const [section, setSection] = useState('Интерфейс')
  const [theme, setTheme] = useState(0)

  return (
    <div role="dialog" aria-label="Установки" className="absolute bottom-[42px] left-[113px] right-[334px] top-[88px] z-10 flex flex-col border border-[#45699a] bg-[#323234] text-[12px] shadow-[0_3px_14px_rgba(0,0,0,0.45)]">
      <div className="flex h-[26px] shrink-0 items-center bg-white pl-[7px] text-[11px] text-black">Установки</div>
      <div className="flex min-h-0 flex-1 gap-[15px] pl-[15px] pr-5 pt-3.5">
        <ul className="mb-16 w-[223px] shrink-0 border border-[#5b95cc] bg-[#313130] text-[10px] text-white">
          {SECTIONS.map((s) => (
            <li key={s}>
              <button
                type="button"
                onClick={() => setSection(s)}
                className={`flex h-[22px] w-full items-center whitespace-nowrap pl-1 ${s === section ? 'bg-[#385470]' : ''}`}
              >
                {s}
              </button>
            </li>
          ))}
        </ul>

        <form className="min-w-0 flex-1" onSubmit={(e) => e.preventDefault()}>
          <h2 className="h-[23px] border-b border-[#2e2e30] leading-[23px] text-[#f2f2f2]">Интерфейс</h2>

          <Group title="Оформление" className="mt-2 pb-2">
            <div className="flex h-[38px] items-center gap-[5px]">
              <span id="theme-label" className="w-[370px] text-right text-[#f2f2f2]">Цветовая тема:</span>
              <div role="radiogroup" aria-labelledby="theme-label" className="flex gap-1">
                {THEMES.map((t, i) => (
                  <label key={t.name} className={`flex size-[33px] items-center justify-center border-2 ${i === theme ? 'border-[#5b95cc] bg-[#1b2c42]' : 'border-transparent'}`}>
                    <input
                      type="radio"
                      name="theme"
                      aria-label={t.name}
                      checked={i === theme}
                      onChange={() => setTheme(i)}
                      className={`size-[25px] appearance-none border border-[#e6e6e6] ${t.color}`}
                    />
                  </label>
                ))}
              </div>
            </div>
            <Check label="Согласовать монтажный стол с цветовой темой" checked />
          </Group>

          <Group title="Параметры курсора и сенсорной технологии" className="mt-3.5 pb-1.5">
            <SelectRow id="hints" label="Подсказки:" value="Быстрые" />
            <Check label="Показывать миниатюры при помещении" checked />
            <Check label="Показать значения трансформирования" checked />
            <Check label="Поддержка сенсорной технологии Multi-Touch" checked />
            <Check label='Выделять объект, на который наведен инструмент "Выделение"' checked />
          </Group>

          <Group title="Панели" className="mt-3.5 pb-1.5">
            <SelectRow id="toolbox" label="Плавающая палитра инструментов:" value="В один столбец" />
            <Check label="Автоматически сворачивать палитры пиктограмм" />
            <Check label="Автоматически показывать скрытые палитры" checked />
            <Check label="Открыть документы как вкладки" checked />
            <Check label="Разрешить прикрепление плавающего окна документа" checked />
            <Check label="Большие вкладки" checked />
          </Group>

          <Group title="Параметры" className="mt-[15px] pb-1.5">
            <div className="flex h-5 items-center gap-[70px] pl-[90px] text-[10px] text-[#f2f2f2]">
              <span>Лучшая производительность</span>
              <span>Более высокое качество</span>
            </div>
            <div className="flex h-[18px] items-center">
              <label htmlFor="hand" className="w-[212px] text-right text-[#f2f2f2]">Инструмент &quot;Рука&quot;:</label>
              <span className="relative ml-[17px] flex w-[206px] items-center">
                <input
                  id="hand"
                  type="range"
                  min={0}
                  max={2}
                  defaultValue={2}
                  className="h-3 w-full appearance-none bg-[linear-gradient(#505052,#505052)] bg-[length:194px_2px] bg-left bg-no-repeat [&::-webkit-slider-thumb]:size-3 [&::-webkit-slider-thumb]:appearance-none [&::-webkit-slider-thumb]:rounded-full [&::-webkit-slider-thumb]:border-2 [&::-webkit-slider-thumb]:border-[#d6d6d6] [&::-webkit-slider-thumb]:bg-[#323234]"
                />
                <span className="pointer-events-none absolute left-0 h-2 w-px bg-[#505052]" />
                <span className="pointer-events-none absolute left-[100px] h-2 w-px bg-[#505052]" />
              </span>
              <span className="ml-[9px] text-[10px] text-[#f2f2f2]">Показывать полностью</span>
            </div>
            <SelectRow id="redraw" label="Интерактивное отображение на экране:" value="С задержкой" height="h-[38px]" />
            <div className="-mt-1.5">
              <Check label="Не отображать векторную графику при перетаскивании" />
            </div>
          </Group>

          <div className="mt-[15px] flex justify-end gap-2.5 pr-2.5 text-[#d8d8d8]">
            <button type="submit" className="h-[27px] w-[90px] rounded-full border-2 border-[#d8d8d8]">OK</button>
            <button type="button" className="h-[27px] w-[90px] rounded-full border border-[#c8c8c8]">Отмена</button>
          </div>
        </form>
      </div>
    </div>
  )
}

export default function App() {
  return (
    <div className="relative flex h-screen flex-col overflow-hidden border-t border-[#1c1c1c] bg-[#323232] font-['DejaVu_Sans_Condensed','DejaVu_Sans',sans-serif]">
      <TitleBar />
      <div className="mx-1 mb-1 flex min-h-0 flex-1 flex-col border-x border-b border-[#222]">
        <ControlBar />
        <div className="flex min-h-0 flex-1">
          <Toolbox />
          <Workspace />
          <Dock />
        </div>
      </div>
      <Preferences />
    </div>
  )
}
